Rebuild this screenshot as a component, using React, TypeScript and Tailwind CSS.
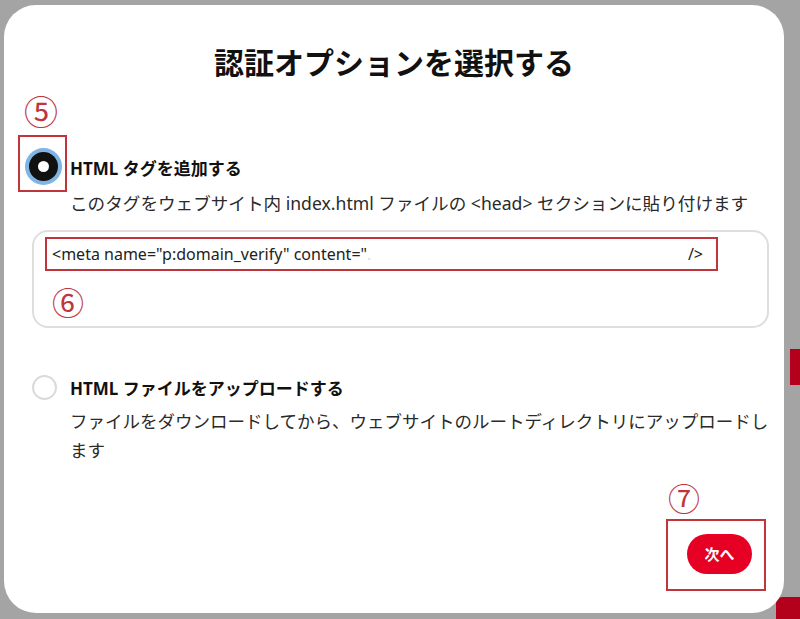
import React from 'react';

const font = "font-['Noto_Sans','Noto_Sans_CJK_JP',sans-serif]";

const Marker = ({n, className = ''}: { n: string; className?: string }) => (
    <div className={`text-[#c0343c] font-normal ${className}`}>{n}</div>
);

const App = () => {
    return (
        <div className={`relative w-[800px] h-[619px] overflow-hidden bg-[#a4a4a4] ${font}`}>
            {/* bits of the page behind the dialog */}
            <div className="absolute right-0 top-[349px] w-[10px] h-[36px] bg-[#b3001b]"/>
            <div className="absolute right-0 bottom-0 w-[24px] h-[22px] rounded-tl-[6px] bg-[#b3001b]"/>

            <div className="relative ml-[4px] mt-[5px] w-[780px] h-[608px] rounded-[32px] bg-white pt-[36px] flex flex-col">
                <h1 className="text-center text-[30px] leading-[40px] font-bold text-[#111] font-['Noto_Sans_CJK_JP',sans-serif]">
                    認証オプションを選択する
                </h1>

                <Marker n="⑤" className="ml-[20px] mt-[13px] text-[34px] leading-[36px]"/>

                <div className="flex items-start mt-[5px]">
                    <div className="ml-[14px] w-[49px] h-[57px] border-2 border-[#c0343c] flex items-start justify-center pt-[11px] pl-[2px]">
                        <div className="w-[37px] h-[37px] rounded-full bg-[#7fb5e3] flex items-center justify-center">
                            <div className="w-[29px] h-[29px] rounded-full bg-[#111] flex items-center justify-center">
                                <div className="w-[11px] h-[11px] rounded-full bg-white"/>
                            </div>
                        </div>
                    </div>
                    <div className="ml-[3px] mt-[22px]">
                        <div className="text-[17px] leading-[24px] font-bold text-[#111]">HTML タグを追加する</div>
                        <div className="mt-[8px] text-[17.6px] leading-[28px] text-[#2a2a2a]">
                            このタグをウェブサイト内 index.html ファイルの &lt;head&gt; セクションに貼り付けます
                        </div>
                    </div>
                </div>

                <div className="ml-[28px] mt-[13px] w-[737px] h-[98px] rounded-[16px] border-2 border-[#dedede] pt-[5px] pl-[11px]">
                    <div className="w-[673px] h-[34px] border-2 border-[#c0343c] flex items-center justify-between pl-[5px] pr-[13px] text-[16px] text-[#222]">
                        <span>&lt;meta name="p:domain_verify" content="<span className="text-[#ddd]">.</span></span>
                        <span>/&gt;</span>
                    </div>
                    <Marker n="⑥" className="ml-[7px] mt-[15px] text-[32px] leading-[34px]"/>
                </div>

                <div className="flex items-start ml-[28px] mt-[47px]">
                    <div className="w-[25px] h-[25px] rounded-full border-2 border-[#dadada]"/>
                    <div className="ml-[13px] mt-[2px] w-[710px]">
                        <div className="text-[17px] leading-[24px] font-bold text-[#111]">HTML ファイルをアップロードする</div>
                        <div className="mt-[6px] text-[17.5px] leading-[29px] text-[#2a2a2a]">
                            ファイルをダウンロードしてから、ウェブサイトのルートディレクトリにアップロードします
                        </div>
                    </div>
                </div>

                <div className="mt-[18px] mr-[18px] self-end flex flex-col items-start">
                    <Marker n="⑦" className="ml-[2px] text-[32px] leading-[32px]"/>
                    <div className="mt-[4px] w-[100px] h-[72px] border-2 border-[#c0343c] pl-[19px] pt-[13px]">
                        <button className="w-[65px] h-[40px] rounded-full bg-[#e60023] text-white text-[15px] font-bold">
                            次へ
                        </button>
                    </div>
                </div>
            </div>
        </div>
    );
};

export default App;
